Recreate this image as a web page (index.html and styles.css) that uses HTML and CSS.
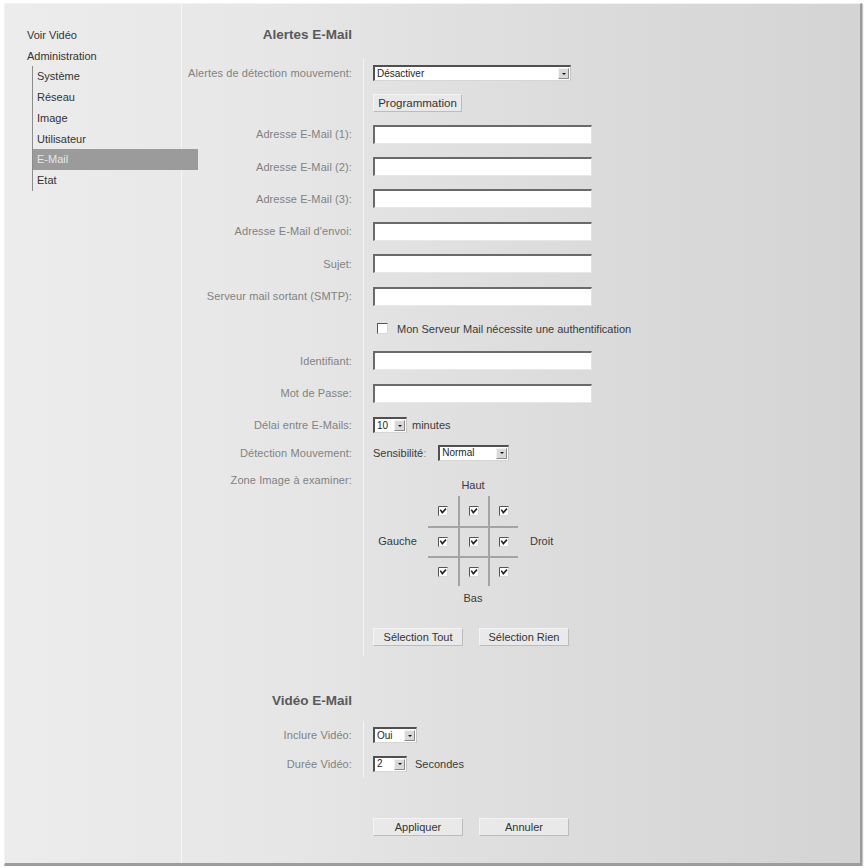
FILE: index.html
```html
<!DOCTYPE html>
<html lang="fr">
<head>
<meta charset="utf-8">
<title>Alertes E-Mail</title>
<link rel="stylesheet" href="styles.css">
</head>
<body>
<div class="frame">
  <nav class="nav">
    <div class="nav-item">Voir Vidéo</div>
    <div class="nav-item">Administration</div>
    <div class="sub">
      <div class="sub-item">Système</div>
      <div class="sub-item">Réseau</div>
      <div class="sub-item">Image</div>
      <div class="sub-item">Utilisateur</div>
      <div class="sub-item active">E-Mail</div>
      <div class="sub-item">Etat</div>
    </div>
  </nav>
  <main class="main">
    <h2 class="sec-title">Alertes E-Mail</h2>
    <div class="form">
      <div class="row h30">
        <div class="lbl">Alertes de détection mouvement:</div>
        <div class="ctl"><div class="select w198"><span class="val">Désactiver</span><span class="arrow"></span></div></div>
      </div>
      <div class="row h30">
        <div class="lbl"></div>
        <div class="ctl"><button class="btn btn-prog" type="button">Programmation</button></div>
      </div>
      <div class="row">
        <div class="lbl">Adresse E-Mail (1):</div>
        <div class="ctl"><input class="txt" type="text"></div>
      </div>
      <div class="row">
        <div class="lbl">Adresse E-Mail (2):</div>
        <div class="ctl"><input class="txt" type="text"></div>
      </div>
      <div class="row">
        <div class="lbl">Adresse E-Mail (3):</div>
        <div class="ctl"><input class="txt" type="text"></div>
      </div>
      <div class="row">
        <div class="lbl">Adresse E-Mail d'envoi:</div>
        <div class="ctl"><input class="txt" type="text"></div>
      </div>
      <div class="row">
        <div class="lbl">Sujet:</div>
        <div class="ctl"><input class="txt" type="text"></div>
      </div>
      <div class="row">
        <div class="lbl">Serveur mail sortant (SMTP):</div>
        <div class="ctl"><input class="txt" type="text"></div>
      </div>
      <div class="row">
        <div class="lbl"></div>
        <div class="ctl"><input class="chk" type="checkbox"><span class="dark">Mon Serveur Mail nécessite une authentification</span></div>
      </div>
      <div class="row">
        <div class="lbl">Identifiant:</div>
        <div class="ctl"><input class="txt" type="text"></div>
      </div>
      <div class="row">
        <div class="lbl">Mot de Passe:</div>
        <div class="ctl"><input class="txt" type="password"></div>
      </div>
      <div class="row h31">
        <div class="lbl">Délai entre E-Mails:</div>
        <div class="ctl"><div class="select w34"><span class="val">10</span><span class="arrow"></span></div><span class="dark unit-min">minutes</span></div>
      </div>
      <div class="row h24">
        <div class="lbl">Détection Mouvement:</div>
        <div class="ctl"><span class="dark sens">Sensibilité<span class="colon">:</span></span><div class="select w71"><span class="val">Normal</span><span class="arrow"></span></div></div>
      </div>
      <div class="row zone">
        <div class="lbl">Zone Image à examiner:</div>
        <div class="ctl zone-ctl">
          <div class="dir">
            <span class="d-haut">Haut</span>
            <span class="d-gauche">Gauche</span>
            <div class="boxes">
              <span class="c"><svg class="cb" viewBox="0 0 10 10"><rect x="0" y="0" width="10" height="10" fill="#fff"/><path d="M0.5 10V0.5H10" stroke="#555" fill="none"/><path d="M9.5 0.5V9.5H0.5" stroke="#d8d8d8" fill="none"/><path d="M2.3 3.6L4.3 6.6L8 2.6" stroke="#222" stroke-width="1.6" fill="none"/></svg></span>
              <span class="c bl"><svg class="cb" viewBox="0 0 10 10"><rect x="0" y="0" width="10" height="10" fill="#fff"/><path d="M0.5 10V0.5H10" stroke="#555" fill="none"/><path d="M9.5 0.5V9.5H0.5" stroke="#d8d8d8" fill="none"/><path d="M2.3 3.6L4.3 6.6L8 2.6" stroke="#222" stroke-width="1.6" fill="none"/></svg></span>
              <span class="c bl"><svg class="cb" viewBox="0 0 10 10"><rect x="0" y="0" width="10" height="10" fill="#fff"/><path d="M0.5 10V0.5H10" stroke="#555" fill="none"/><path d="M9.5 0.5V9.5H0.5" stroke="#d8d8d8" fill="none"/><path d="M2.3 3.6L4.3 6.6L8 2.6" stroke="#222" stroke-width="1.6" fill="none"/></svg></span>
              <span class="c bt"><svg class="cb" viewBox="0 0 10 10"><rect x="0" y="0" width="10" height="10" fill="#fff"/><path d="M0.5 10V0.5H10" stroke="#555" fill="none"/><path d="M9.5 0.5V9.5H0.5" stroke="#d8d8d8" fill="none"/><path d="M2.3 3.6L4.3 6.6L8 2.6" stroke="#222" stroke-width="1.6" fill="none"/></svg></span>
              <span class="c bl bt"><svg class="cb" viewBox="0 0 10 10"><rect x="0" y="0" width="10" height="10" fill="#fff"/><path d="M0.5 10V0.5H10" stroke="#555" fill="none"/><path d="M9.5 0.5V9.5H0.5" stroke="#d8d8d8" fill="none"/><path d="M2.3 3.6L4.3 6.6L8 2.6" stroke="#222" stroke-width="1.6" fill="none"/></svg></span>
              <span class="c bl bt"><svg class="cb" viewBox="0 0 10 10"><rect x="0" y="0" width="10" height="10" fill="#fff"/><path d="M0.5 10V0.5H10" stroke="#555" fill="none"/><path d="M9.5 0.5V9.5H0.5" stroke="#d8d8d8" fill="none"/><path d="M2.3 3.6L4.3 6.6L8 2.6" stroke="#222" stroke-width="1.6" fill="none"/></svg></span>
              <span class="c bt"><svg class="cb" viewBox="0 0 10 10"><rect x="0" y="0" width="10" height="10" fill="#fff"/><path d="M0.5 10V0.5H10" stroke="#555" fill="none"/><path d="M9.5 0.5V9.5H0.5" stroke="#d8d8d8" fill="none"/><path d="M2.3 3.6L4.3 6.6L8 2.6" stroke="#222" stroke-width="1.6" fill="none"/></svg></span>
              <span class="c bl bt"><svg class="cb" viewBox="0 0 10 10"><rect x="0" y="0" width="10" height="10" fill="#fff"/><path d="M0.5 10V0.5H10" stroke="#555" fill="none"/><path d="M9.5 0.5V9.5H0.5" stroke="#d8d8d8" fill="none"/><path d="M2.3 3.6L4.3 6.6L8 2.6" stroke="#222" stroke-width="1.6" fill="none"/></svg></span>
              <span class="c bl bt"><svg class="cb" viewBox="0 0 10 10"><rect x="0" y="0" width="10" height="10" fill="#fff"/><path d="M0.5 10V0.5H10" stroke="#555" fill="none"/><path d="M9.5 0.5V9.5H0.5" stroke="#d8d8d8" fill="none"/><path d="M2.3 3.6L4.3 6.6L8 2.6" stroke="#222" stroke-width="1.6" fill="none"/></svg></span>
            </div>
            <span class="d-droit">Droit</span>
            <span class="d-bas">Bas</span>
          </div>
          <div class="btnrow">
            <button class="btn" type="button">Sélection Tout</button>
            <button class="btn" type="button">Sélection Rien</button>
          </div>
        </div>
      </div>
    </div>

    <h2 class="sec-title sec2">Vidéo E-Mail</h2>
    <div class="form">
      <div class="row h29">
        <div class="lbl">Inclure Vidéo:</div>
        <div class="ctl"><div class="select w44"><span class="val">Oui</span><span class="arrow"></span></div></div>
      </div>
      <div class="row h28">
        <div class="lbl">Durée Vidéo:</div>
        <div class="ctl"><div class="select w34"><span class="val">2</span><span class="arrow"></span></div><span class="dark unit-sec">Secondes</span></div>
      </div>
    </div>

    <div class="actions">
      <button class="btn" type="button">Appliquer</button>
      <button class="btn" type="button">Annuler</button>
    </div>
  </main>
</div>
</body>
</html>
```

FILE: styles.css
```css
html, body {
  margin: 0;
  padding: 0;
  background: #ffffff;
}

body {
  font-family: "Liberation Sans", Arial, sans-serif;
  font-size: 11px;
  color: #333;
}

.frame {
  display: flex;
  box-sizing: border-box;
  width: 858px;
  height: 863px;
  margin: 3px 0 0 4px;
  border-top: 1px solid #f3f3f3;
  border-left: 1px solid #f3f3f3;
  border-right: 2px solid #9a9a9a;
  border-bottom: 3px solid #9c9c9c;
  box-shadow: 1px 1px 1px #c4c4c4;
  background: linear-gradient(to right, #ececec 0%, #e7e7e7 30%, #dcdcdc 65%, #d4d4d4 100%);
}

/* ---------- navigation ---------- */
.nav {
  flex: none;
  width: 176px;
  padding-top: 21px;
  border-right: 1px solid #f6f6f6;
}

.nav-item {
  padding-left: 22px;
  line-height: 20.7px;
  color: #333;
}

.sub {
  margin-left: 27px;
  border-left: 1px solid #8c8c8c;
}

.sub-item {
  padding-left: 4px;
  line-height: 20.7px;
  color: #333;
}

.sub-item.active {
  position: relative;
  z-index: 1;
  width: 161px;
  background: #9b9b9b;
  color: #e6e6e6;
}

/* ---------- main ---------- */
.main {
  flex: 1;
  padding-top: 22px;
}

.sec-title {
  margin: 0 0 14px;
  width: 170px;
  text-align: right;
  font-size: 13.5px;
  line-height: 18px;
  font-weight: bold;
  color: #595959;
}

.sec-title.sec2 {
  margin-top: 36px;
  margin-bottom: 11px;
}

.row {
  display: grid;
  grid-template-columns: 181px 1fr;
  height: 32.4px;
}

.row.h30 { height: 30px; }
.row.h31 { height: 31px; }
.row.h24 { height: 24px; }
.row.h29 { height: 29px; }
.row.h28 { height: 28px; }

.lbl {
  display: flex;
  align-items: center;
  justify-content: flex-end;
  padding-right: 11px;
  color: #828282;
  letter-spacing: 0.1px;
  white-space: nowrap;
}

.ctl {
  display: flex;
  align-items: center;
  padding-left: 9px;
  border-left: 1px solid #f5f5f5;
}

.dark {
  color: #3a3a3a;
}

/* text inputs */
.txt {
  box-sizing: border-box;
  width: 219px;
  height: 19px;
  margin: 0;
  padding: 0 3px;
  background: #fff;
  border-style: solid;
  border-width: 2px 1px 1px 2px;
  border-color: #6a6a6a #e2e2e2 #e8e8e8 #6a6a6a;
  font-family: "Liberation Sans", Arial, sans-serif;
  font-size: 11px;
  outline: none;
}

/* select look-alike */
.select {
  display: inline-flex;
  align-items: center;
  box-sizing: border-box;
  height: 16px;
  background: #fff;
  border-style: solid;
  border-width: 2px 1px 1px 2px;
  border-color: #505050 #c4c4c4 #d6d6d6 #505050;
}

.select .val {
  flex: 1;
  padding-left: 2px;
  font-size: 10px;
  line-height: 12px;
  color: #1e1e1e;
  white-space: nowrap;
}

.select .arrow {
  display: flex;
  align-items: center;
  justify-content: center;
  box-sizing: border-box;
  width: 11px;
  height: 11px;
  margin-right: 1px;
  background: #d9d9d9;
  border: 1px solid;
  border-color: #f2f2f2 #8a8a8a #8a8a8a #f2f2f2;
}

.select .arrow::after {
  content: "";
  border-left: 2px solid transparent;
  border-right: 2px solid transparent;
  border-top: 2px solid #111;
}

.w198 { width: 198px; }
.w34 { width: 34px; }
.w71 { width: 71px; }
.w44 { width: 44px; }

.unit-min { margin-left: 5px; }
.unit-sec { margin-left: 8px; }

.sens {
  margin-right: 12px;
}

.sens .colon {
  color: #888;
}

/* checkbox */
.chk {
  appearance: none;
  -webkit-appearance: none;
  box-sizing: border-box;
  width: 11px;
  height: 11px;
  margin: 0 9px 0 4px;
  background: #fff;
  border: 1px solid;
  border-color: #555 #d8d8d8 #d8d8d8 #555;
}

/* buttons */
.btn {
  box-sizing: border-box;
  width: 90px;
  height: 18px;
  padding: 0;
  margin: 0;
  background: #e9e9e9;
  border: 1px solid;
  border-color: #f4f4f4 #bcbcbc #bcbcbc #f4f4f4;
  font-family: "Liberation Sans", Arial, sans-serif;
  font-size: 11px;
  color: #333;
}

.btn-prog {
  width: 89px;
  font-size: 11.5px;
}

/* zone grid */
.row.zone {
  height: auto;
}

.row.zone .lbl {
  align-items: flex-start;
  padding-top: 8px;
  line-height: 14px;
}

.zone-ctl {
  display: block;
  padding-top: 9px;
  padding-bottom: 10px;
}

.dir {
  display: grid;
  grid-template-columns: 55px 90px auto;
  grid-template-rows: 22px 90px 24px;
  grid-template-areas:
    ". haut ."
    "gauche boxes droit"
    ". bas .";
  color: #3a3a3a;
}

.d-haut { grid-area: haut; text-align: center; align-self: center; }
.d-bas { grid-area: bas; text-align: center; align-self: center; }
.d-gauche { grid-area: gauche; align-self: center; text-align: center; padding-right: 6px; }
.d-droit { grid-area: droit; align-self: center; padding-left: 12px; }

.boxes {
  grid-area: boxes;
  display: grid;
  grid-template-columns: repeat(3, 30px);
  grid-template-rows: repeat(3, 30px);
}

.c {
  display: flex;
  align-items: center;
  justify-content: center;
  box-sizing: border-box;
}

.c.bl { border-left: 2px solid #a4a4a4; }
.c.bt { border-top: 2px solid #a4a4a4; }

.cb {
  display: block;
  width: 10px;
  height: 10px;
}

.btnrow {
  display: flex;
  gap: 16px;
  margin-top: 18px;
}

.actions {
  display: flex;
  gap: 16px;
  margin-top: 40px;
  padding-left: 191px;
}
```
